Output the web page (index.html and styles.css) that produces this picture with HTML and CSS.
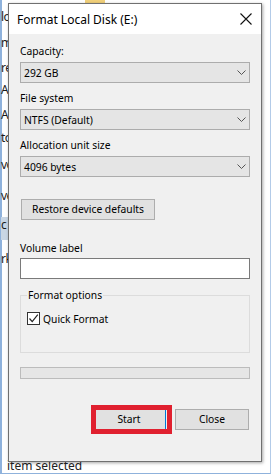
FILE: index.html
```html
<!DOCTYPE html>
<html lang="en">
<head>
<meta charset="utf-8">
<title>Format Local Disk (E:)</title>
<link rel="stylesheet" href="styles.css">
</head>
<body>
<div class="explorer">
  <div class="toolbar"><span class="folder"></span></div>
  <ul class="nav">
    <li>lo</li>
    <li>m</li>
    <li>re</li>
    <li>Ap</li>
    <li>Ap</li>
    <li>to</li>
    <li>vo</li>
    <li>ve</li>
    <li class="sel">c</li>
    <li>rk</li>
  </ul>
  <div class="status">item selected</div>
</div>

<div class="dialog">
  <div class="titlebar">
    <span class="title">Format Local Disk (E:)</span>
    <svg class="close" width="12" height="12" viewBox="0 0 12 12"><path d="M0.5 0.5 L11.5 11.5 M11.5 0.5 L0.5 11.5" stroke="#111" stroke-width="1.1" fill="none"/></svg>
  </div>
  <div class="content">
    <div class="lbl first">Capacity:</div>
    <div class="select"><span>292 GB</span><svg class="chev" width="9" height="5" viewBox="0 0 9 5"><path d="M0.5 0.5 L4.5 4.5 L8.5 0.5" stroke="#555" stroke-width="1" fill="none"/></svg></div>

    <div class="lbl next">File system</div>
    <div class="select"><span>NTFS (Default)</span><svg class="chev" width="9" height="5" viewBox="0 0 9 5"><path d="M0.5 0.5 L4.5 4.5 L8.5 0.5" stroke="#555" stroke-width="1" fill="none"/></svg></div>

    <div class="lbl next">Allocation unit size</div>
    <div class="select"><span>4096 bytes</span><svg class="chev" width="9" height="5" viewBox="0 0 9 5"><path d="M0.5 0.5 L4.5 4.5 L8.5 0.5" stroke="#555" stroke-width="1" fill="none"/></svg></div>

    <button class="btn restore" type="button">Restore device defaults</button>

    <div class="lbl vol-lbl">Volume label</div>
    <input class="vol" type="text" aria-label="Volume label">

    <fieldset class="group">
      <legend>Format options</legend>
      <div class="check-row">
        <span class="check"><svg width="11" height="11" viewBox="0 0 11 11"><path d="M1.5 5.5 L4.2 8.6 L9.8 1.6" stroke="#222" stroke-width="1.2" fill="none"/></svg></span>
        <span>Quick Format</span>
      </div>
    </fieldset>

    <div class="progress"></div>

    <div class="actions">
      <span class="start-wrap">
        <button class="btn start" type="button">Start</button>
        <span class="highlight"></span>
      </span>
      <button class="btn close-btn" type="button">Close</button>
    </div>
  </div>
</div>
</body>
</html>
```

FILE: styles.css
```css
* { box-sizing: border-box; }

html, body {
  margin: 0;
  padding: 0;
}

body {
  width: 271px;
  height: 475px;
  position: relative;
  overflow: hidden;
  background: #ffffff;
  font-family: "Noto Sans", "Open Sans", sans-serif;
  font-size: 10.3px;
  color: #000;
}

/* Background explorer window */
.explorer {
  height: 474px;
  border-left: 2px solid #8fb2dc;
  border-right: 1px solid #b3cbe8;
  border-bottom: 1px solid #8fb2dc;
  display: flex;
  flex-direction: column;
}

.toolbar {
  height: 4px;
}

.folder {
  display: block;
  margin-left: 83px;
  width: 20px;
  height: 3px;
  background: #f1d07a;
}

.nav {
  list-style: none;
  margin: 0 0 0 -1px;
  padding: 2px 0 0 0;
  display: flex;
  flex-direction: column;
  width: 120px;
}

.nav li {
  height: 22px;
  line-height: 22px;
  font-size: 12px;
  letter-spacing: -0.5px;
  color: #1a1a1a;
  white-space: nowrap;
}

.nav li:nth-child(2) { margin-top: 4px; }
.nav li:nth-child(3) { margin-top: 3px; }
.nav li:nth-child(5) { margin-top: 3px; }
.nav li:nth-child(6) { margin-top: 1px; }
.nav li:nth-child(7) { margin-top: 5px; }
.nav li:nth-child(8) { margin-top: 9px; }
.nav li:nth-child(9) { margin-top: 10px; }
.nav li:nth-child(10) { margin-top: 8px; }

.nav li.sel {
  height: 23px;
  line-height: 15px;
  background: #c9d6e4;
}

.status {
  margin-top: auto;
  height: 15px;
  line-height: 15px;
  padding-left: 5px;
  font-size: 12px;
  color: #222;
}

/* Dialog */
.dialog {
  position: absolute;
  left: 8px;
  top: 3px;
  width: 254px;
  height: 459px;
  border: 1px solid #707070;
  background: #f0f0f0;
  box-shadow: 1px 1px 3px rgba(0, 0, 0, 0.35);
  display: flex;
  flex-direction: column;
  z-index: 1;
}

.titlebar {
  height: 30px;
  flex: none;
  background: #ffffff;
  display: flex;
  align-items: center;
  padding-left: 8px;
  padding-right: 9px;
}

.title {
  font-size: 12px;
  color: #000;
}

.close {
  margin-left: auto;
  display: block;
}

.content {
  flex: 1;
  display: flex;
  flex-direction: column;
  padding: 0 11px;
}

.lbl {
  height: 15px;
  line-height: 15px;
  white-space: nowrap;
}

.lbl.first { margin-top: 10px; }
.lbl.next { margin-top: 8px; }

.select {
  margin-top: 3px;
  height: 21px;
  border: 1px solid #acacac;
  background: #e5e5e5;
  display: flex;
  align-items: center;
  justify-content: space-between;
  padding: 0 3px 0 3px;
}

.chev { display: block; }

.btn {
  font-family: inherit;
  font-size: 10.3px;
  color: #000;
  height: 21px;
  padding: 0;
  border: 1px solid #adadad;
  background: #e1e1e1;
  border-radius: 0;
  line-height: 19px;
  text-align: center;
}

.restore {
  margin-top: 22px;
  margin-left: 1px;
  width: 134px;
  align-self: flex-start;
}

.vol-lbl { margin-top: 21px; }

.vol {
  margin: 2px 0 0 0;
  height: 21px;
  width: 100%;
  border: 1px solid #7a7a7a;
  background: #fff;
  padding: 0 3px;
  font-family: inherit;
  font-size: 10.3px;
  outline: none;
  border-radius: 0;
}

.group {
  margin: 9px 0 0 0;
  padding: 8px 6px 26px 6px;
  border: 1px solid #dcdcdc;
  min-width: 0;
}

.group legend {
  padding: 0 1px;
  line-height: 15px;
  height: 15px;
}

.check-row {
  height: 15px;
  display: flex;
  align-items: center;
  gap: 3px;
}

.check {
  width: 13px;
  height: 13px;
  border: 1px solid #333;
  background: #fff;
  display: flex;
  align-items: center;
  justify-content: center;
}

.check svg { display: block; }

.progress {
  margin-top: 14px;
  height: 12px;
  border: 1px solid #bcbcbc;
  background: #e6e6e6;
}

.actions {
  margin-top: 30px;
  display: flex;
  justify-content: flex-end;
  gap: 9px;
  padding-right: 1px;
}

.start-wrap {
  position: relative;
  display: block;
}

.start {
  display: block;
  width: 74px;
  border-color: #0078d7;
}

.close-btn {
  width: 74px;
}

.highlight {
  position: absolute;
  left: -1px;
  top: -4px;
  width: 81px;
  height: 29px;
  border: 5px solid #e0202f;
  pointer-events: none;
}
```
